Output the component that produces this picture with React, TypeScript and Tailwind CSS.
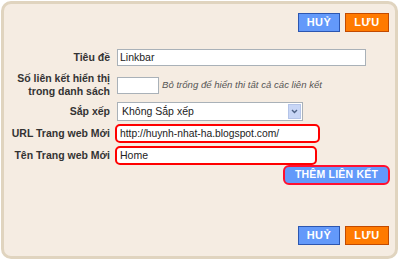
export default function App() {
  const label = "w-[106px] shrink-0 text-right font-bold text-[10.5px] leading-[13px] text-[#333]";
  const blueBtn =
    "h-[19px] flex items-center justify-center bg-[#6399fa] border border-[#2c56b0] text-white font-bold text-[11px] tracking-[0.5px]";
  const orangeBtn =
    "h-[19px] flex items-center justify-center bg-[#ff7a00] border border-[#c24a00] text-white font-bold text-[11px] tracking-[0.5px]";

  return (
    <div className="w-[400px] h-[261px] bg-white pt-[1px] pl-[1px] font-['Liberation_Sans',Arial,sans-serif]">
      <div className="w-[397px] h-[258px] rounded-[10px] border-[3px] border-[#e0d4bf] bg-[#f5ece2] flex flex-col">
        {/* Top actions */}
        <div className="flex justify-end gap-[5px] pt-[9px] pr-[6px]">
          <button className={`${blueBtn} w-[42px]`}>HUỶ</button>
          <button className={`${orangeBtn} w-[44px]`}>LƯU</button>
        </div>

        {/* Form */}
        <div className="mt-[17px] flex flex-col">
          <div className="flex items-center">
            <div className={label}>Tiêu đề</div>
            <div className="ml-[7px] w-[249px] h-[17px] bg-white border border-[#a9b1b8] pl-[2px] flex items-center text-[10.5px] text-[#222]">
              Linkbar
            </div>
          </div>

          <div className="flex items-center mt-[6px]">
            <div className={label}>
              Số liên kết hiển thị
              <br />
              trong danh sách
            </div>
            <div className="ml-[7px] w-[42px] h-[17px] bg-white border border-[#a9b1b8]" />
            <span className="ml-[3px] italic text-[9.6px] text-[#555]">
              Bỏ trống để hiển thi tất cả các liên kết
            </span>
          </div>

          <div className="flex items-center mt-[4px]">
            <div className={label}>Sắp xếp</div>
            <div className="ml-[7px] w-[186px] h-[19px] bg-white border border-[#a9b1b8] flex items-center justify-between pl-[4px] pr-[1px] text-[10.5px] text-[#222]">
              <span>Không Sắp xếp</span>
              <span className="w-[13px] h-[15px] bg-[#c8d6f6] border border-[#b4c4e8] flex items-center justify-center">
                <svg width="7" height="5" viewBox="0 0 7 5">
                  <path d="M1 1 L3.5 3.5 L6 1" stroke="#4d6185" strokeWidth="1.4" fill="none" />
                </svg>
              </span>
            </div>
          </div>

          <div className="flex items-center mt-[3px]">
            <div className={label}>URL Trang web Mới</div>
            <div className="ml-[5px] w-[205px] h-[19px] bg-white border-2 border-[#ff0000] rounded-[5px] pl-[3px] flex items-center text-[10.3px] text-[#222]">
              http://huynh-nhat-ha.blogspot.com/
            </div>
          </div>

          <div className="flex items-center mt-[3px]">
            <div className={label}>Tên Trang web Mới</div>
            <div className="ml-[5px] w-[202px] h-[19px] bg-white border-2 border-[#ff0000] rounded-[5px] pl-[3px] flex items-center text-[10.5px] text-[#222]">
              Home
            </div>
          </div>

          <div className="flex justify-end pr-[5px]">
            <button className="w-[107px] h-[20px] rounded-[6px] border-2 border-[#ff1030] bg-[#6399fa] text-white font-bold text-[10.5px] tracking-[0.2px] flex items-center justify-center">
              THÊM LIÊN KẾT
            </button>
          </div>
        </div>

        {/* Bottom actions */}
        <div className="mt-auto flex justify-end gap-[5px] pb-[11px] pr-[6px]">
          <button className={`${blueBtn} w-[42px]`}>HUỶ</button>
          <button className={`${orangeBtn} w-[44px]`}>LƯU</button>
        </div>
      </div>
    </div>
  );
}
